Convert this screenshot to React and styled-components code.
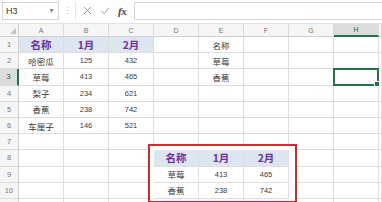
import React from 'react';
import styled, { createGlobalStyle, css } from 'styled-components';

const Global = createGlobalStyle`
  html, body { margin: 0; padding: 0; background: #fff; }
  body {
    width: 382px; height: 202px; overflow: hidden;
    font-family: "Liberation Sans", "Noto Sans CJK SC", sans-serif;
  }
`;

const Page = styled.div`
  width: 382px;
  height: 202px;
  overflow: hidden;
  display: flex;
  flex-direction: column;
  background: #fff;
`;

const FormulaBar = styled.div`
  height: 24px;
  flex: none;
  box-sizing: border-box;
  display: flex;
  align-items: center;
  padding: 0 0 2px 2px;
  border-bottom: 1px solid #e2e2e2;
  background: #fff;
`;

const NameBox = styled.div`
  width: 57px;
  height: 18px;
  box-sizing: border-box;
  border: 1px solid #d4d4d4;
  display: flex;
  align-items: center;
  justify-content: space-between;
  padding: 0 3px 0 3px;
  font-size: 9px;
  color: #333;
`;

const Caret = styled.span`
  font-size: 7px;
  color: #888;
`;

const Dots = styled.span`
  width: 16px;
  text-align: center;
  color: #c0c0c0;
  font-size: 9px;
`;

const IconGroup = styled.div`
  height: 18px;
  display: flex;
  align-items: center;
  gap: 8px;
  padding: 0 5px 0 7px;
  border-left: 1px solid #e6e6e6;
`;

const Fx = styled.span`
  font-family: "Liberation Serif", serif;
  font-style: italic;
  font-weight: bold;
  font-size: 11px;
  color: #444;
  letter-spacing: -0.5px;
`;

const FormulaInput = styled.div`
  flex: 1;
  height: 18px;
  box-sizing: border-box;
  border: 1px solid #d4d4d4;
  border-right: none;
  margin-left: 3px;
`;

const Sheet = styled.div`
  display: grid;
  grid-template-columns: 19px repeat(8, 45px) 1fr;
  grid-template-rows: 13px repeat(11, 16.2px);
`;

const Corner = styled.div`
  background: #f5f5f5;
  border-right: 1px solid #d0d0d0;
  border-bottom: 1px solid #d0d0d0;
  display: flex;
  align-items: flex-end;
  justify-content: flex-end;
  padding: 0 2px 2px 0;
  box-sizing: border-box;
`;

const ColHead = styled.div`
  box-sizing: border-box;
  background: ${(p) => (p.$active ? '#dcdcdc' : '#f5f5f5')};
  border-right: 1px solid #dadada;
  border-bottom: ${(p) => (p.$active ? '2px solid #217346' : '1px solid #d0d0d0')};
  color: ${(p) => (p.$active ? '#1f5c38' : '#777')};
  font-size: 7px;
  display: flex;
  align-items: center;
  justify-content: center;
`;

const RowHead = styled.div`
  box-sizing: border-box;
  background: ${(p) => (p.$active ? '#dcdcdc' : '#f5f5f5')};
  border-right: ${(p) => (p.$active ? '2px solid #217346' : '1px solid #d0d0d0')};
  border-bottom: 1px solid #dcdcdc;
  color: ${(p) => (p.$active ? '#1f5c38' : '#777')};
  font-size: 7.5px;
  display: flex;
  align-items: center;
  justify-content: center;
`;

const Cell = styled.div`
  box-sizing: border-box;
  border-right: 1px solid #dedede;
  border-bottom: 1px solid #dedede;
  background: ${(p) => (p.$head ? '#dce6f1' : '#fff')};
  display: flex;
  align-items: center;
  justify-content: center;
  white-space: nowrap;
  color: ${(p) => (p.$head ? '#7030a0' : '#3a3a3a')};
  font-family: ${(p) =>
    p.$head
      ? '"Noto Sans CJK SC", "Liberation Serif", serif'
      : '"Liberation Sans", "Noto Sans CJK SC", sans-serif'};
  font-size: ${(p) => (p.$head ? '10.5px' : p.$num ? '7.5px' : '8.5px')};
  font-weight: ${(p) => (p.$head ? 700 : 400)};
  ${(p) =>
    p.$raised &&
    css`
      position: relative;
      z-index: 2;
    `}
  ${(p) =>
    p.$selected &&
    css`
      position: relative;
      border: 2px solid #217346;
      margin: -1px 0 0 -1px;
    `}
`;

const FillHandle = styled.span`
  position: absolute;
  right: -3px;
  bottom: -3px;
  width: 4px;
  height: 4px;
  background: #217346;
  border: 1px solid #fff;
`;

const Highlight = styled.div`
  grid-column: 5 / 8;
  grid-row: 9 / 12;
  margin: -6px -8px -4px -6px;
  border: 2px solid #d32a2a;
  background: #fff;
  position: relative;
  z-index: 1;
  pointer-events: none;
`;

const COLS = ['A', 'B', 'C', 'D', 'E', 'F', 'G', 'H'];

const DATA = {
  A1: { v: '名称', head: true }, B1: { v: '1月', head: true }, C1: { v: '2月', head: true },
  A2: { v: '哈密瓜' }, B2: { v: '125', num: true }, C2: { v: '432', num: true },
  A3: { v: '草莓' }, B3: { v: '413', num: true }, C3: { v: '465', num: true },
  A4: { v: '梨子' }, B4: { v: '234', num: true }, C4: { v: '621', num: true },
  A5: { v: '香蕉' }, B5: { v: '238', num: true }, C5: { v: '742', num: true },
  A6: { v: '车厘子' }, B6: { v: '146', num: true }, C6: { v: '521', num: true },
  E1: { v: '名称' }, E2: { v: '草莓' }, E3: { v: '香蕉' },
  D8: { v: '名称', head: true }, E8: { v: '1月', head: true }, F8: { v: '2月', head: true },
  D9: { v: '草莓' }, E9: { v: '413', num: true }, F9: { v: '465', num: true },
  D10: { v: '香蕉' }, E10: { v: '238', num: true }, F10: { v: '742', num: true },
};

const inBox = (c, r) => c >= 3 && c <= 5 && r >= 8 && r <= 10;

export default function App() {
  const rows = [];
  for (let r = 1; r <= 11; r++) {
    rows.push(
      <RowHead key={`rh${r}`} $active={r === 3}>
        {r <= 10 ? r : ''}
      </RowHead>
    );
    COLS.forEach((col, c) => {
      const d = DATA[`${col}${r}`] || {};
      const sel = col === 'H' && r === 3;
      rows.push(
        <Cell
          key={`${col}${r}`}
          $head={d.head}
          $num={d.num}
          $raised={inBox(c, r)}
          $selected={sel}
          style={{ gridColumn: c + 2, gridRow: r + 1 }}
        >
          {d.v}
          {sel && <FillHandle />}
        </Cell>
      );
    });
    rows.push(<Cell key={`x${r}`} style={{ gridColumn: 10, gridRow: r + 1 }} />);
  }

  return (
    <Page>
      <Global />
      <FormulaBar>
        <NameBox>
          <span>H3</span>
          <Caret>▼</Caret>
        </NameBox>
        <Dots>⋮</Dots>
        <IconGroup>
          <svg width="9" height="9" viewBox="0 0 10 10">
            <path d="M1 1 L9 9 M9 1 L1 9" stroke="#9a9a9a" strokeWidth="1.1" fill="none" />
          </svg>
          <svg width="10" height="9" viewBox="0 0 10 10">
            <path d="M1 5.5 L4 8.5 L9.5 2" stroke="#9a9a9a" strokeWidth="1.1" fill="none" />
          </svg>
          <Fx>fx</Fx>
        </IconGroup>
        <FormulaInput />
      </FormulaBar>
      <Sheet>
        <Corner>
          <svg width="6" height="6" viewBox="0 0 6 6">
            <path d="M6 0 L6 6 L0 6 Z" fill="#c2c2c2" />
          </svg>
        </Corner>
        {COLS.map((c) => (
          <ColHead key={c} $active={c === 'H'}>
            {c}
          </ColHead>
        ))}
        <ColHead />
        {rows}
        <Highlight />
      </Sheet>
    </Page>
  );
}
